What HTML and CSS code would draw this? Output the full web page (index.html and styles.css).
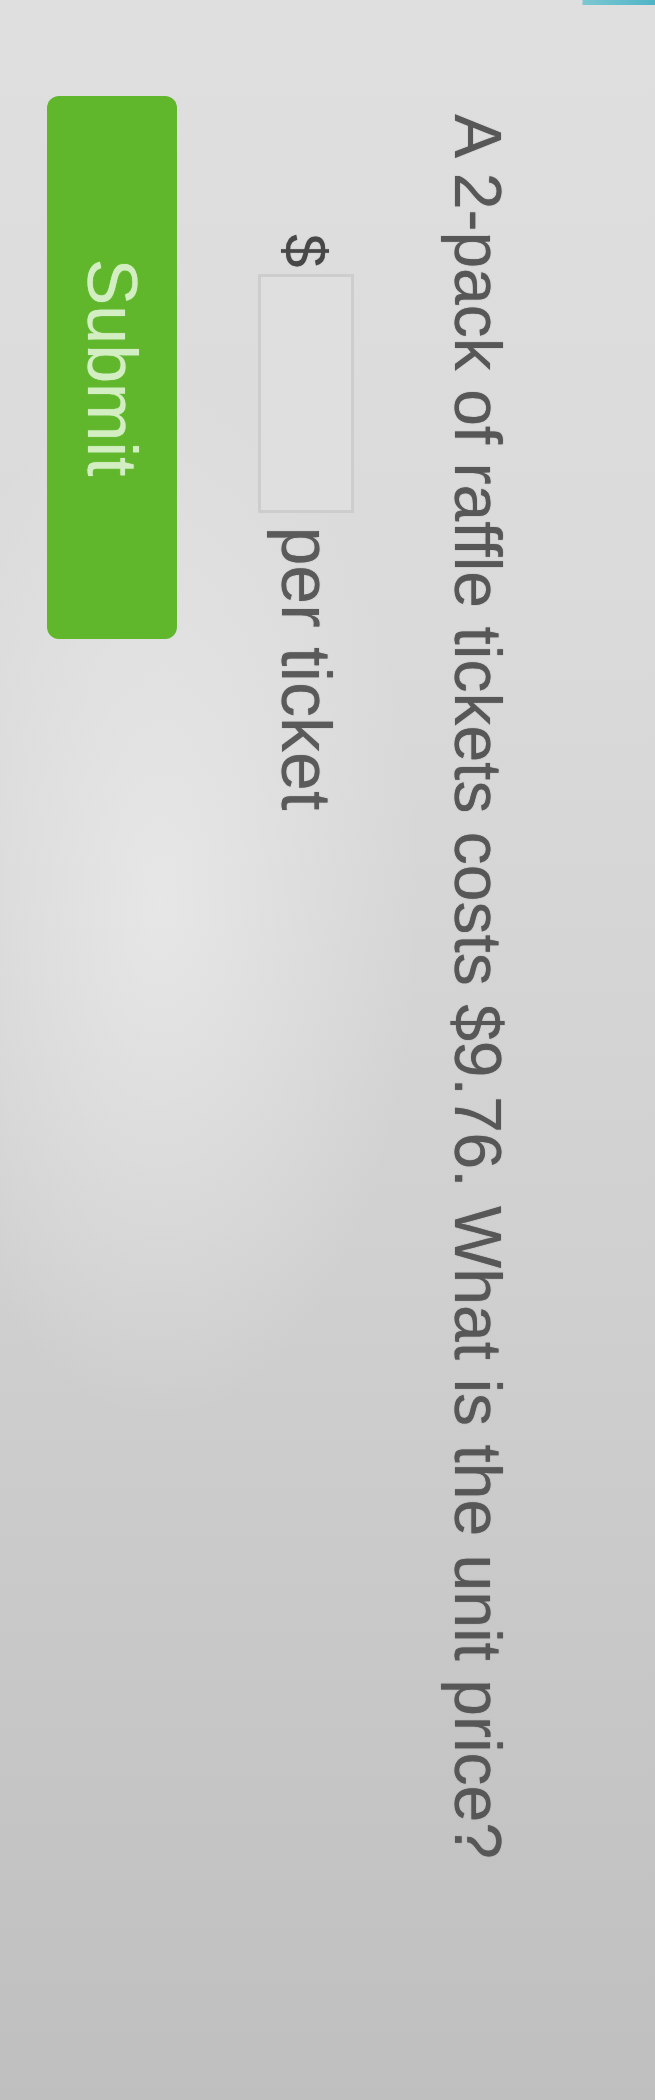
FILE: index.html
```html
<!DOCTYPE html>
<html lang="en">
<head>
<meta charset="utf-8">
<title>Unit price question</title>
<link rel="stylesheet" href="styles.css">
</head>
<body>
<div class="viewport">
  <div class="stage">
    <p class="question">A 2-pack of raffle tickets costs $9.76. What is the unit price?</p>
    <div class="answer-row">
      <span class="currency">$</span>
      <input class="answer-box" type="text" aria-label="Unit price">
      <span class="unit">per ticket</span>
    </div>
    <button class="submit" type="button">Submit</button>
  </div>
</div>
</body>
</html>
```

FILE: styles.css
```css
html, body {
  margin: 0;
  padding: 0;
}

body {
  width: 655px;
  height: 2100px;
  overflow: hidden;
  font-family: "Liberation Sans", Arial, sans-serif;
  background-color: #d2d2d2;
  background-image:
    linear-gradient(to left, #4fb4c6 0, #7cc7d2 72px, rgba(210,210,210,0) 73px),
    radial-gradient(ellipse 260px 520px at 160px 900px, rgba(236,236,236,0.75), rgba(236,236,236,0) 100%),
    linear-gradient(to bottom, #dfdfdf 0%, #dadada 30%, #d0d0d0 60%, #c5c5c5 85%, #bfbfbf 100%);
  background-size: 100% 5px, 100% 100%, 100% 100%;
  background-repeat: no-repeat;
}

.viewport {
  width: 655px;
  height: 2100px;
  overflow: hidden;
}

.stage {
  width: 2100px;
  height: 655px;
  box-sizing: border-box;
  padding: 144px 0 0 96px;
  transform-origin: 0 0;
  transform: translateX(655px) rotate(90deg);
  display: flex;
  flex-direction: column;
  align-items: flex-start;
}

.question {
  margin: 0 0 0 18px;
  font-size: 66px;
  line-height: 66px;
  color: #575757;
  white-space: nowrap;
  text-shadow: 0 0 1px rgba(70, 70, 70, 0.7);
}

.answer-row {
  margin: 91px 0 0 138px;
  display: flex;
  align-items: center;
  gap: 7px;
  height: 96px;
  font-size: 70px;
  color: #5a5a5a;
  text-shadow: 0 0 1px rgba(70, 70, 70, 0.6);
}

.currency {
  color: #474747;
  font-size: 60px;
}

.answer-box {
  width: 239px;
  height: 96px;
  box-sizing: border-box;
  margin: 0 6px 0 0;
  border: 3px solid #cdcdcd;
  background: #dfdfdf;
  outline: none;
  padding: 0;
}

.unit {
  line-height: 1;
}

.submit {
  margin: 81px 0 0 0;
  width: 543px;
  height: 130px;
  border: none;
  border-radius: 12px;
  background: #60b72c;
  color: #d3eec2;
  font-family: "Liberation Sans", Arial, sans-serif;
  font-size: 70px;
  padding: 0;
  text-shadow: 0 0 1px rgba(220, 245, 205, 0.8);
}
```
